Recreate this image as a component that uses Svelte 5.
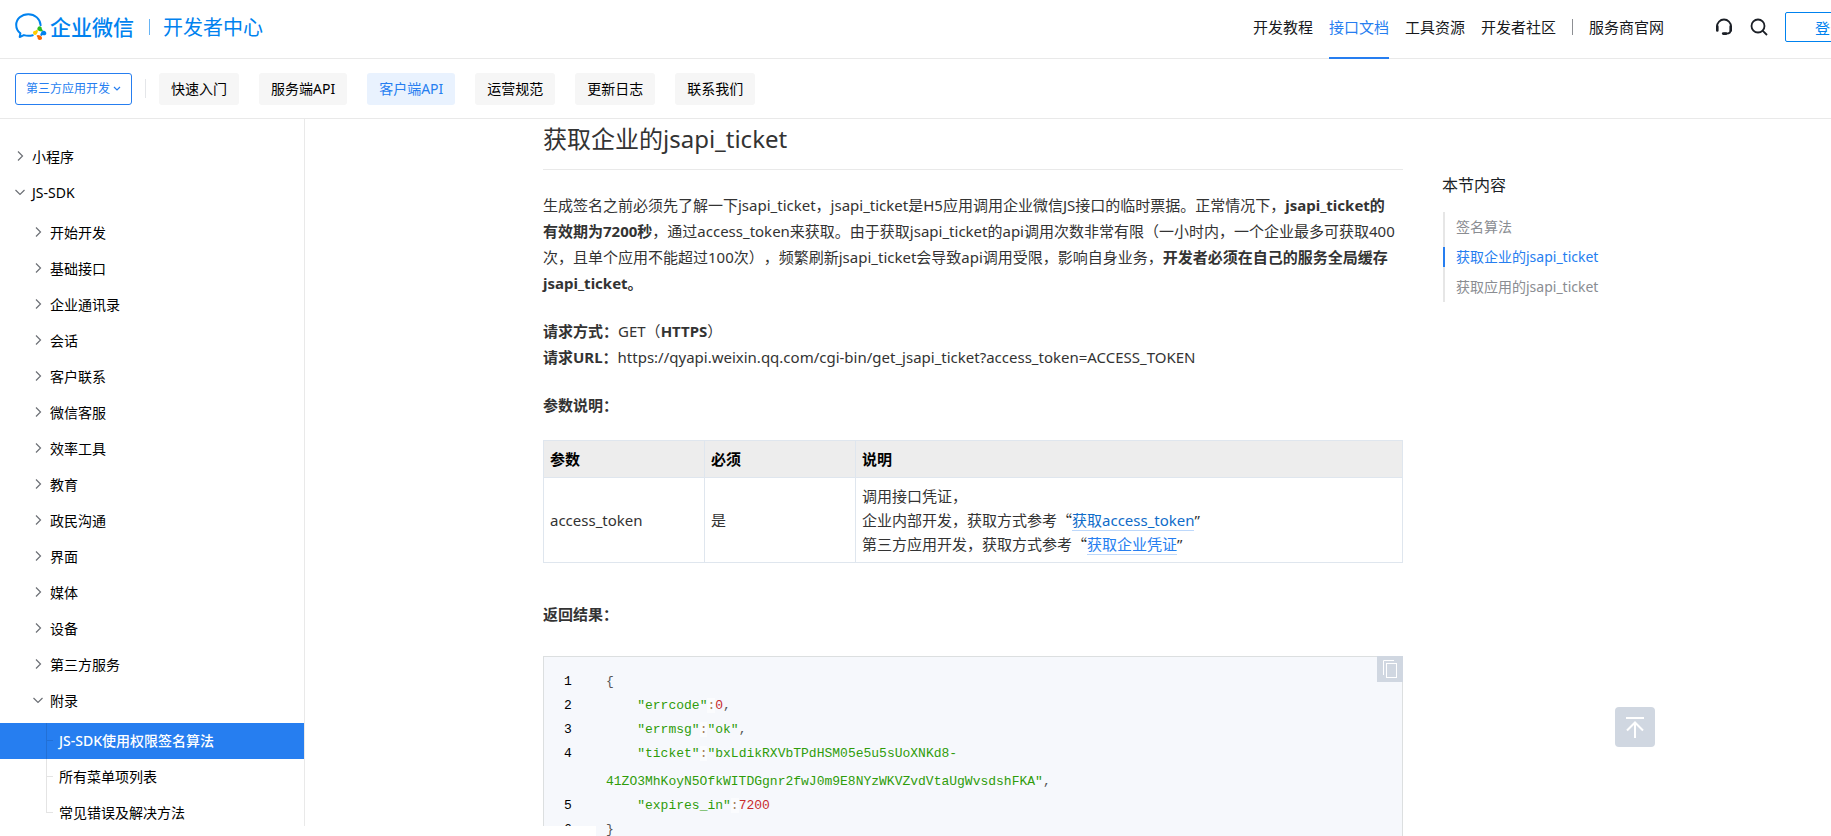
<script lang="ts">
  interface MenuItem {
    title: string;
    open?: boolean;
    children?: { title: string; active?: boolean }[];
  }

  const navLinks = ['开发教程', '接口文档', '工具资源', '开发者社区'];
  const tabs = ['快速入门', '服务端API', '客户端API', '运营规范', '更新日志', '联系我们'];
  const toc = ['签名算法', '获取企业的jsapi_ticket', '获取应用的jsapi_ticket'];
  const indent = '    ';

  const sdkMenu: MenuItem[] = [
    { title: '开始开发' },
    { title: '基础接口' },
    { title: '企业通讯录' },
    { title: '会话' },
    { title: '客户联系' },
    { title: '微信客服' },
    { title: '效率工具' },
    { title: '教育' },
    { title: '政民沟通' },
    { title: '界面' },
    { title: '媒体' },
    { title: '设备' },
    { title: '第三方服务' },
    {
      title: '附录',
      open: true,
      children: [
        { title: 'JS-SDK使用权限签名算法', active: true },
        { title: '所有菜单项列表' },
        { title: '常见错误及解决方法' },
      ],
    },
  ];

  let activeNav = $state('接口文档');
  let activeTab = $state('客户端API');
  let activeSection = $state('获取企业的jsapi_ticket');
</script>

{#snippet arrow(open: boolean)}
  <svg class="arrow" class:open width="10" height="10" viewBox="0 0 10 10" fill="none">
    <path d="M3 0.5L7.5 5L3 9.5" stroke="currentColor" stroke-width="1.2" />
  </svg>
{/snippet}

<div class="page" lang="zh-CN">
  <header class="header">
    <a class="logo" href="#home">
      <svg width="32" height="28" viewBox="0 0 32 28" fill="none">
        <path d="M25.6 12.2C25.2 6 20 1.2 13.3 1.2C6.600 1.2 1.2 6 1.2 12C1.2 15.600 2.900 18.400 5.400 20.400L4.700 24L8.900 22.100C11.800 23 15 23 17.800 22.200" stroke="#0082ef" stroke-width="2" stroke-linecap="round" stroke-linejoin="round" />
        <path d="M22.300 16.500C22.300 14.500 23.300 13.400 24.500 13.300C25.900 13.300 27 14.500 26.800 15.900L28 17.600L26.700 18.400C25 18.300 23 17.900 22.300 16.500Z" fill="#2dbc1d" />
        <path d="M31.300 21C30.800 22.200 29 22.600 27.700 21.900L26 23.200L25.300 21.800C25.700 20.100 26.500 18.300 28.200 17.800C30 17.400 31.700 19.200 31.300 21Z" fill="#0082ef" />
        <path d="M24.800 27C23.200 27 22.400 25.700 22.600 24.500L21.500 22.800L22.900 22.100C24.700 22.500 26.600 23.100 27 24.700C27.200 26 26.200 27 24.800 27Z" fill="#fb6500" />
        <path d="M18 19.700C18 18.300 19.200 17.500 20.400 17.700L22.200 16.600L23 18C22.600 19.800 21.900 21.600 20.300 21.900C19 22 18 21 18 19.700Z" fill="#ffcc00" />
      </svg>
      <span class="brand">企业微信</span>
      <span class="brand-line"></span>
      <span class="brand-sub">开发者中心</span>
    </a>
    <nav class="nav">
      {#each navLinks as link}
        <a href="#nav" class:active={link === activeNav} onclick={() => (activeNav = link)}>{link}</a>
      {/each}
      <span class="nav-line"></span>
      <a href="#provider">服务商官网</a>
    </nav>
    <div class="tools">
      <button class="icon-btn" aria-label="客服">
        <svg width="18" height="18" viewBox="0 0 18 18" fill="none" stroke="#1b1f26">
          <path d="M2 10V8.500A7 7 0 0 1 16 8.500V11C16 14 14.500 15.600 11.500 15.600H9" stroke-width="1.800" />
          <path d="M2.300 8.500V12.500M15.700 8.500V12.500" stroke-width="2.600" stroke-linecap="round" />
          <path d="M8.200 15.600H11" stroke-width="2.600" stroke-linecap="round" />
        </svg>
      </button>
      <button class="icon-btn" aria-label="搜索">
        <svg width="18" height="18" viewBox="0 0 18 18" fill="none" stroke="#1b1f26" stroke-width="1.800">
          <circle cx="8" cy="8" r="6.500" />
          <path d="M12.600 12.600L17 17" />
        </svg>
      </button>
      <button class="login">登录</button>
    </div>
  </header>

  <div class="subnav">
    <div class="picker">
      <select aria-label="开发类型">
        <option>第三方应用开发</option>
      </select>
      <svg width="8" height="6" viewBox="0 0 8 6" fill="none">
        <path d="M1 1L4 4L7 1" stroke="#267ef0" stroke-width="1.200" />
      </svg>
    </div>
    <span class="subnav-line"></span>
    {#each tabs as tab}
      <button class="tab" class:active={tab === activeTab} onclick={() => (activeTab = tab)}>{tab}</button>
    {/each}
  </div>

  <div class="body">
    <aside class="sidebar">
      <ul>
        <li><a class="item" href="#mini">{@render arrow(false)}小程序</a></li>
        <li>
          <a class="item" href="#jssdk">{@render arrow(true)}JS-SDK</a>
          <ul class="level2">
            {#each sdkMenu as item}
              <li>
                <a class="item" href="#doc">{@render arrow(!!item.open)}{item.title}</a>
                {#if item.children}
                  <ul class="level3">
                    {#each item.children as child}
                      <li class:active={child.active}><a class="leaf" href="#doc">{child.title}</a></li>
                    {/each}
                  </ul>
                {/if}
              </li>
            {/each}
          </ul>
        </li>
      </ul>
    </aside>

    <main class="main">
      <article class="doc">
        <h2>获取企业的jsapi_ticket</h2>
        <p>
          生成签名之前必须先了解一下jsapi_ticket，jsapi_ticket是H5应用调用企业微信JS接口的临时票据。正常情况下，<strong>jsapi_ticket的<span class="keep">有效期为7200秒</span></strong>，通过access_token来获取。由于获取jsapi_ticket的api调用次数非常有限（一小时内，一个企业最多可获取400次，且单个应用不能超过100次），频繁刷新jsapi_ticket会导致api调用受限，影响自身业务，<strong>开发者必须在自己的服务全局缓存jsapi_ticket。</strong>
        </p>
        <p>
          <strong>请求方式：</strong>GET（<strong>HTTPS</strong>）<br />
          <strong>请求URL：</strong>https://qyapi.weixin.qq.com/cgi-bin/get_jsapi_ticket?access_token=ACCESS_TOKEN
        </p>
        <p><strong>参数说明：</strong></p>
        <table>
          <thead>
            <tr><th class="name">参数</th><th class="required">必须</th><th>说明</th></tr>
          </thead>
          <tbody>
            <tr>
              <td>access_token</td>
              <td>是</td>
              <td>
                调用接口凭证，<br />
                企业内部开发，获取方式参考<span class="quote">“</span><a class="visited" href="#token">获取access_token</a>”<br />
                第三方应用开发，获取方式参考<span class="quote">“</span><a href="#corp">获取企业凭证</a>”
              </td>
            </tr>
          </tbody>
        </table>
        <p><strong>返回结果：</strong></p>
        <div class="code">
          <button class="copy" aria-label="复制">
            <svg width="26" height="26" viewBox="0 0 26 26" fill="none" stroke="#fff">
              <path d="M6.500 19V4.500H17" />
              <rect x="9.500" y="7.500" width="10" height="14" />
            </svg>
          </button>
          <ol>
            <li><code>{'{'}</code></li>
            <li><code>{indent}<span class="str">"errcode"</span><span class="op">:</span><span class="num">0</span>,</code></li>
            <li><code>{indent}<span class="str">"errmsg"</span><span class="op">:</span><span class="str">"ok"</span>,</code></li>
            <li>
              <code>{indent}<span class="str">"ticket"</span><span class="op">:</span><span class="str">"bxLdikRXVbTPdHSM05e5u5sUoXNKd8-</span><span class="wrap"><span class="str">41ZO3MhKoyN5OfkWITDGgnr2fwJ0m9E8NYzWKVZvdVtaUgWvsdshFKA"</span>,</span></code>
            </li>
            <li><code>{indent}<span class="str">"expires_in"</span><span class="op">:</span><span class="num">7200</span></code></li>
            <li><code>{'}'}</code></li>
          </ol>
        </div>
      </article>

      <nav class="toc">
        <h3>本节内容</h3>
        <ul>
          {#each toc as section}
            <li class:active={section === activeSection}>
              <a href="#section" onclick={() => (activeSection = section)}>{section}</a>
            </li>
          {/each}
        </ul>
      </nav>
    </main>
  </div>

  <button class="to-top" aria-label="返回顶部">
    <svg width="20" height="22" viewBox="0 0 20 22" fill="none" stroke="#fff" stroke-width="2">
      <path d="M1 2H19M10 22V7M2 14.500L10 6.500L18 14.500" />
    </svg>
  </button>
  <div class="status"></div>
</div>

<style>
  :global(body) {
    margin: 0;
    overflow: hidden;
    background: #fff;
  }

  .page {
    display: flex;
    flex-direction: column;
    height: 100vh;
    font-family: 'Noto Sans', 'Noto Sans CJK SC', sans-serif;
    font-size: 14px;
    color: #000;
    text-spacing-trim: space-all;
  }

  a {
    color: inherit;
    text-decoration: none;
  }

  ul,
  ol {
    list-style: none;
    margin: 0;
    padding: 0;
  }

  button,
  select {
    font: inherit;
    cursor: pointer;
  }

  .header {
    display: flex;
    flex: none;
    height: 58px;
    border-bottom: 1px solid #e9e9e9;
  }

  .logo {
    display: flex;
    align-items: center;
    height: 54px;
    margin-left: 15px;
    color: #0082ef;
    white-space: nowrap;
  }

  .brand {
    margin-left: 3px;
    font-size: 21px;
    font-weight: 500;
    line-height: 30px;
  }

  .brand-line {
    width: 1px;
    height: 16px;
    margin: 0 13px 0 15px;
    background: #66b4f5;
  }

  .brand-sub {
    padding-top: 2px;
    font-size: 20px;
    line-height: 30px;
  }

  .nav {
    display: flex;
    gap: 16px;
    margin-left: auto;
    font-size: 15px;
    line-height: 54px;
    white-space: nowrap;
    color: #17191d;
  }

  .nav a {
    height: 57px;
  }

  .nav a.active {
    color: #267ef0;
    border-bottom: 2px solid #267ef0;
  }

  .nav-line {
    width: 1px;
    height: 16px;
    margin-top: 19px;
    background: #8d8f93;
  }

  .tools {
    display: flex;
    align-items: center;
    gap: 17px;
    height: 54px;
    margin-left: 51px;
    /* the login button runs past the window edge */
    margin-right: -44px;
  }

  .icon-btn {
    display: flex;
    padding: 0;
    border: none;
    background: none;
  }

  .login {
    height: 30px;
    padding: 0 29px;
    border: 1px solid #0082ef;
    border-radius: 2px;
    background: #fff;
    color: #0082ef;
    font-size: 15px;
    white-space: nowrap;
  }

  .subnav {
    display: flex;
    flex: none;
    align-items: center;
    gap: 20px;
    height: 59px;
    padding: 0 15px;
    border-bottom: 1px solid #e9e9e9;
  }

  .picker {
    display: flex;
    align-items: center;
    position: relative;
  }

  .picker select {
    appearance: none;
    height: 32px;
    padding: 0 20px 0 10px;
    border: 1px solid #267ef0;
    border-radius: 3px;
    background: #fff;
    color: #267ef0;
    font-size: 12px;
  }

  .picker svg {
    position: absolute;
    right: 11px;
    pointer-events: none;
  }

  .subnav-line {
    width: 1px;
    height: 19px;
    margin: 0 -7px;
    background: #e4e6e9;
  }

  .tab {
    height: 32px;
    padding: 0 12px 2px;
    border: none;
    border-radius: 3px;
    background: #f6f6f6;
    color: #000;
    white-space: nowrap;
  }

  .tab.active {
    background: #e9f2fe;
    color: #267ef0;
  }

  .body {
    display: flex;
    flex: 1;
    min-height: 0;
    overflow: hidden;
  }

  .sidebar {
    flex: none;
    box-sizing: border-box;
    width: 305px;
    padding-top: 20px;
    border-right: 1px solid #e9e9e9;
  }

  .item,
  .leaf {
    display: flex;
    align-items: center;
    box-sizing: border-box;
    height: 36px;
    padding-bottom: 2px;
  }

  .item {
    gap: 7px;
    padding-left: 15px;
  }

  .level2,
  .level3 {
    margin-top: 4px;
  }

  .level2 .item {
    padding-left: 33px;
  }

  .arrow {
    color: #6c6f75;
  }

  .arrow.open {
    transform: rotate(90deg);
  }

  .leaf {
    position: relative;
    padding-left: 59px;
  }

  /* tree guide: vertical stem and the short branch to each leaf */
  .leaf::before {
    content: '';
    position: absolute;
    left: 46px;
    top: 0;
    width: 1px;
    height: 100%;
    background: #e4e4e4;
  }

  .leaf::after {
    content: '';
    position: absolute;
    left: 46px;
    top: 17px;
    width: 7px;
    height: 1px;
    background: #e4e4e4;
  }

  li:last-child > .leaf::before {
    height: 18px;
  }

  .active > .leaf {
    background: #267ef0;
    color: #fff;
    font-weight: 500;
  }

  .active > .leaf::before,
  .active > .leaf::after {
    background: #2270d6;
  }

  .main {
    display: flex;
    flex: 1;
    gap: 39px;
    min-width: 0;
    padding: 0 200px 0 238px;
  }

  .doc {
    flex: 1;
    min-width: 0;
    color: #333;
    font-size: 15px;
    line-height: 26px;
  }

  .doc h2 {
    margin: 0 0 22px;
    padding: 2px 0 12px;
    border-bottom: 1px solid #e9e9e9;
    font-size: 24px;
    font-weight: 400;
    line-height: 36px;
  }

  .doc p {
    margin: 0 0 22px;
  }

  .doc strong {
    font-weight: 700;
  }

  .keep {
    white-space: nowrap;
  }

  table {
    width: 100%;
    margin-bottom: 38px;
    border-collapse: collapse;
    line-height: 24px;
  }

  th,
  td {
    padding: 6px;
    border: 1px solid #dfe6ee;
    text-align: left;
  }

  th {
    background: #ededed;
    color: #000;
    font-weight: 700;
  }

  .name {
    width: 148px;
  }

  .required {
    width: 138px;
  }

  td a {
    border-bottom: 1px solid #bdd8fb;
    color: #267ef0;
  }

  td a.visited {
    color: #0f6cc9;
  }

  .quote {
    font-family: 'Noto Sans CJK SC', sans-serif;
  }

  .code {
    position: relative;
    margin-top: 29px;
    padding: 13px 0;
    border: 1px solid #dcdfe0;
    background: #f6f8fc;
    font-size: 13px;
    line-height: 24px;
  }

  .code ol {
    counter-reset: line;
  }

  .code li {
    display: flex;
    counter-increment: line;
  }

  .code li::before {
    content: counter(line);
    flex: none;
    width: 42px;
    padding-left: 20px;
    color: #000;
    font-family: 'Liberation Mono', monospace;
  }

  .code code {
    color: #555;
    font-family: 'Liberation Mono', monospace;
    white-space: pre;
  }

  .wrap {
    display: block;
    margin-top: 4px;
  }

  .str {
    color: #2f9c0a;
  }

  .num {
    color: #c92c2c;
  }

  .op {
    background: rgba(255, 255, 255, 0.5);
    color: #a67f59;
  }

  .copy {
    display: flex;
    position: absolute;
    top: -1px;
    right: -1px;
    padding: 0;
    border: none;
    background: #d0d7e1;
  }

  .toc {
    flex: none;
    width: 189px;
    padding-top: 54px;
    white-space: nowrap;
  }

  .toc h3 {
    margin: 0 0 15px;
    font-size: 16px;
    font-weight: 400;
    line-height: 24px;
    color: #1b1f26;
  }

  .toc ul {
    margin-left: 1px;
  }

  .toc li {
    padding-left: 11px;
    border-left: 2px solid #e6e6e6;
    line-height: 30px;
    color: #8a8d92;
  }

  .toc li.active {
    position: relative;
    color: #267ef0;
  }

  .toc li.active::before {
    content: '';
    position: absolute;
    left: -2px;
    top: 5px;
    width: 2px;
    height: 20px;
    background: #267ef0;
  }

  .to-top {
    display: flex;
    align-items: center;
    justify-content: center;
    position: fixed;
    right: 176px;
    bottom: 89px;
    width: 40px;
    height: 40px;
    border: none;
    border-radius: 4px;
    background: #d0d7e1;
  }

  .status {
    position: fixed;
    left: 0;
    bottom: 0;
    width: 596px;
    height: 10px;
    background: #fff;
  }
</style>
